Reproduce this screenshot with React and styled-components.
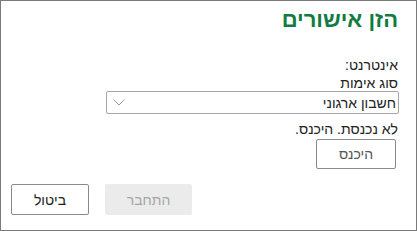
import React from 'react';
import styled, { createGlobalStyle } from 'styled-components';

const GlobalStyle = createGlobalStyle`
  html, body {
    margin: 0;
    padding: 0;
    background: #ffffff;
  }
  body {
    font-family: "Liberation Sans", "DejaVu Sans", sans-serif;
  }
`;

const Frame = styled.div`
  width: 417px;
  height: 231px;
  box-sizing: border-box;
  border: 1px solid #7a7a7a;
  background: #fff;
  direction: rtl;
  display: flex;
  flex-direction: column;
  padding: 0 18px 0 9px;
  color: #222;
`;

const Title = styled.h1`
  margin: 6px 0 0;
  font-size: 22px;
  font-weight: bold;
  line-height: 26px;
  color: #107c41;
`;

const Body = styled.div`
  display: flex;
  flex-direction: column;
  margin-top: 23px;
`;

const Label = styled.div`
  font-size: 14px;
  line-height: ${(p) => p.$lh || 19}px;
  margin-top: ${(p) => p.$gap || 0}px;
`;

const SelectBox = styled.div`
  width: 293px;
  height: 23px;
  box-sizing: border-box;
  border: 1px solid #a6a6a6;
  border-radius: 2px;
  display: flex;
  align-items: center;
  justify-content: space-between;
  padding: 0 2px 0 6px;
  font-size: 14px;
  margin-right: -1px;
`;

const Chevron = styled.svg`
  width: 12px;
  height: 7px;
`;

const Button = styled.button`
  box-sizing: border-box;
  width: ${(p) => p.$w}px;
  height: ${(p) => p.$h}px;
  border: 1px solid ${(p) => (p.disabled ? '#ebebeb' : '#8a8a8a')};
  border-radius: 2px;
  background: ${(p) => (p.disabled ? '#ebebeb' : '#fff')};
  color: ${(p) => (p.disabled ? '#a6a6a6' : p.$muted ? '#555' : '#222')};
  font-family: inherit;
  font-size: 14px;
  padding: 0;
  cursor: pointer;
`;

const InlineRow = styled.div`
  display: flex;
  margin-top: 2px;
  margin-right: 2px;
`;

const Footer = styled.div`
  display: flex;
  justify-content: flex-end;
  gap: 16px;
  margin-top: auto;
  margin-bottom: 15px;
  margin-left: 1px;
`;

export default function App() {
  return (
    <>
      <GlobalStyle />
      <Frame>
        <Title>הזן אישורים</Title>
        <Body>
          <Label>אינטרנט:</Label>
          <Label $gap={1} $lh={15}>סוג אימות</Label>
          <SelectBox>
            <span>חשבון ארגוני</span>
            <Chevron viewBox="0 0 12 7">
              <polyline points="0.5,0.5 6,6 11.5,0.5" fill="none" stroke="#9a9a9a" strokeWidth="1" />
            </Chevron>
          </SelectBox>
          <Label $gap={7} $lh={16}>לא נכנסת. היכנס.</Label>
          <InlineRow>
            <Button $w={80} $h={30} $muted>היכנס</Button>
          </InlineRow>
        </Body>
        <Footer>
          <Button $w={87} $h={31} disabled>התחבר</Button>
          <Button $w={78} $h={31}>ביטול</Button>
        </Footer>
      </Frame>
    </>
  );
}
